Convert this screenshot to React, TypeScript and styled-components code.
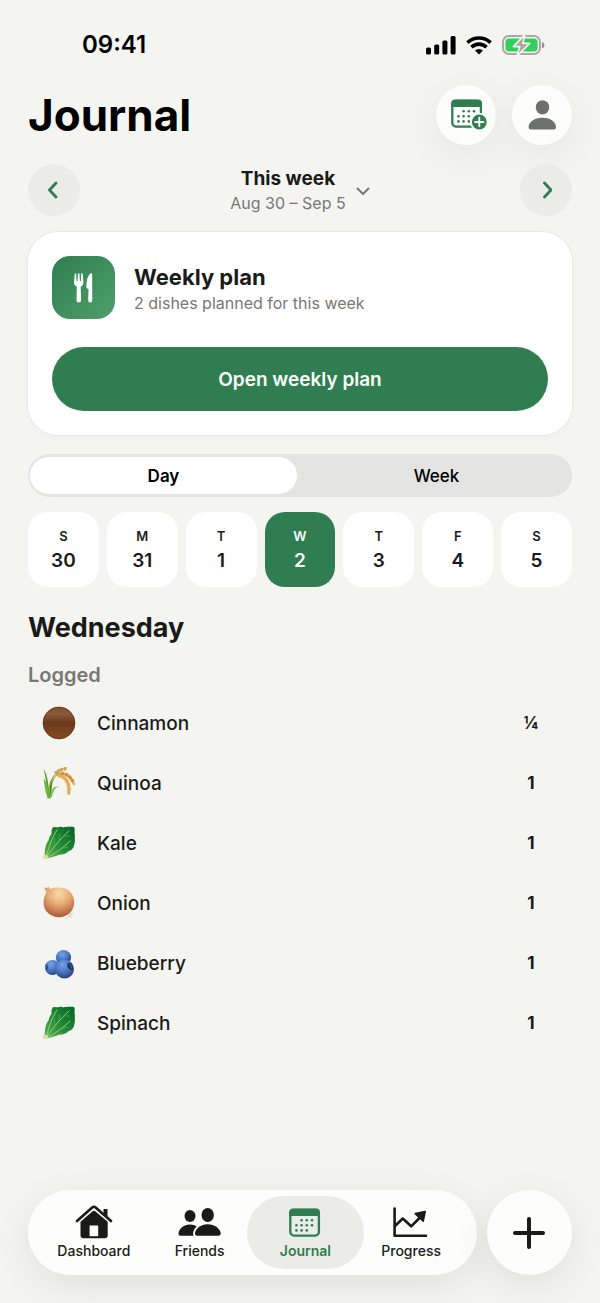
import { useState } from "react";
import styled, { createGlobalStyle } from "styled-components";

const GREEN = "#307d51";
const INK = "#1a1b19";

type DayT = { letter: string, date: number };
const days: DayT[] = [
  { letter: "S", date: 30 },
  { letter: "M", date: 31 },
  { letter: "T", date: 1 },
  { letter: "W", date: 2 },
  { letter: "T", date: 3 },
  { letter: "F", date: 4 },
  { letter: "S", date: 5 },
];

const logged = [
  { name: "Cinnamon", amount: "¼", Icon: CinnamonIcon },
  { name: "Quinoa", amount: "1", Icon: GrainIcon },
  { name: "Kale", amount: "1", Icon: LeafIcon },
  { name: "Onion", amount: "1", Icon: OnionIcon },
  { name: "Blueberry", amount: "1", Icon: BlueberryIcon },
  { name: "Spinach", amount: "1", Icon: LeafIcon },
];

const tabs = [
  { label: "Dashboard", Icon: HouseIcon },
  { label: "Friends", Icon: FriendsIcon },
  { label: "Journal", Icon: CalendarIcon },
  { label: "Progress", Icon: ProgressIcon },
];

export default function App() {
  const [mode, setMode] = useState("Day");
  const [selected, setSelected] = useState(2);

  return (
    <>
      <GlobalStyle />
      <Page>
        <StatusBar>
          <Time>09:41</Time>
          <StatusIcons>
            <SignalIcon />
            <WifiIcon />
            <BatteryIcon />
          </StatusIcons>
        </StatusBar>

        <Header>
          <PageTitle>Journal</PageTitle>
          <HeaderActions>
            <RoundButton aria-label="Add to calendar"><CalendarAddIcon /></RoundButton>
            <RoundButton aria-label="Profile"><PersonIcon /></RoundButton>
          </HeaderActions>
        </Header>

        <WeekNav>
          <ArrowButton aria-label="Previous week">
            <Chevron d="M8 2 1.500 9 8 16" />
          </ArrowButton>
          <WeekPicker>
            <span>
              <WeekName>This week</WeekName>
              <WeekRange>Aug 30 – Sep 5</WeekRange>
            </span>
            <svg width="14" height="9" viewBox="0 0 14 9" fill="none" stroke="#777876" strokeWidth="2" strokeLinecap="round" strokeLinejoin="round">
              <path d="m1.500 1.500 5.500 5.500 5.500-5.500" />
            </svg>
          </WeekPicker>
          <ArrowButton aria-label="Next week">
            <Chevron d="m4.500 2 6.500 7-6.500 7" />
          </ArrowButton>
        </WeekNav>

        <Card>
          <CardTop>
            <CardIcon><CutleryIcon /></CardIcon>
            <CardBody>
              <CardTitle>Weekly plan</CardTitle>
              <CardText>2 dishes planned for this week</CardText>
            </CardBody>
          </CardTop>
          <PrimaryButton>Open weekly plan</PrimaryButton>
        </Card>

        <Segmented>
          {["Day", "Week"].map((name) => (
            <Segment key={name} $active={mode === name} aria-pressed={mode === name} onClick={() => setMode(name)}>
              {name}
            </Segment>
          ))}
        </Segmented>

        <Days>
          {days.map(({ letter, date }) => (
            <DayButton key={date} $active={selected === date} onClick={() => setSelected(date)}>
              <DayLetter>{letter}</DayLetter>
              <DayDate>{date}</DayDate>
            </DayButton>
          ))}
        </Days>

        <DayTitle>Wednesday</DayTitle>
        <SectionTitle>Logged</SectionTitle>
        <List>
          {logged.map(({ name, amount, Icon }) => (
            <Row key={name}>
              <Icon />
              <RowName>{name}</RowName>
              <Amount>{amount}</Amount>
            </Row>
          ))}
        </List>

        <BottomBar>
          <TabBar>
            {tabs.map(({ label, Icon }) => (
              <Tab key={label} href="#" $active={label === "Journal"}>
                <Icon />
                {label}
              </Tab>
            ))}
          </TabBar>
          <AddButton aria-label="Add">
            <svg width="34" height="32" viewBox="0 0 34 32" stroke={INK} strokeWidth="4" strokeLinecap="round">
              <path d="M16 2v28M2 16h28" />
            </svg>
          </AddButton>
        </BottomBar>
      </Page>
    </>
  );
}

function Chevron({ d }: { d: string }) {
  return (
    <svg width="12" height="18" viewBox="0 0 12 18" fill="none" stroke={GREEN} strokeWidth="2.800" strokeLinecap="round" strokeLinejoin="round">
      <path d={d} />
    </svg>
  );
}

function SignalIcon() {
  return (
    <svg width="30" height="20" viewBox="0 0 30 20">
      <rect x="0" y="12.5" width="5" height="7" rx="1.6" />
      <rect x="8.2" y="9.4" width="5" height="10.1" rx="1.6" />
      <rect x="16.4" y="5.4" width="5" height="14.1" rx="1.6" />
      <rect x="24.6" y="1" width="5" height="18.5" rx="1.6" />
    </svg>
  );
}

function WifiIcon() {
  return (
    <svg width="26" height="20" viewBox="0 0 26 20" fill="none" stroke="#000" strokeWidth="3.6">
      <path d="M1.4 7.600a16.800 16.800 0 0 1 23.200 0" />
      <path d="M5.500 12.200a10.800 10.800 0 0 1 15 0" />
      <path d="M13 19.6 9 15.600a5.800 5.800 0 0 1 8 0z" fill="#000" stroke="none" />
    </svg>
  );
}

function BatteryIcon() {
  return (
    <svg width="43" height="22" viewBox="0 0 43 22">
      <rect x="1" y="2" width="37" height="18" rx="6" fill="none" stroke="#aaa9a8" strokeWidth="2" />
      <rect x="3.4" y="4.4" width="32.2" height="13.2" rx="3.8" fill="#34cf5b" />
      <path d="M40 8v6.4c1.5-.5 2.4-1.7 2.4-3.2S41.500 8.500 40 8z" fill="#8f8f8e" />
      <path d="M23 .4 11.400 12.600h6.400l-2.800 9.200L27.800 9.400h-7z" fill="#aaa5a5" stroke="#f4f5f1" strokeWidth="1.600" strokeLinejoin="round" />
    </svg>
  );
}

function CalendarShape() {
  return (
    <>
      <rect x="1.300" y="1.800" width="28.600" height="25.800" rx="3.600" fill="none" stroke="currentColor" strokeWidth="2.300" />
      <path d="M.2 8V4.600Q.2.600 4.200.6H27Q31 .6 31 4.600V8z" fill="currentColor" />
      <g fill="currentColor">
        {[12.600, 17.800, 23].map((x) => <circle key={x} cx={x} cy="12.200" r="1.300" />)}
        {[7.400, 12.600, 17.800, 23].map((x) => <circle key={x} cx={x} cy="17.300" r="1.300" />)}
        {[7.400, 12.600, 17.800].map((x) => <circle key={x} cx={x} cy="22.400" r="1.300" />)}
      </g>
    </>
  );
}

function CalendarIcon() {
  return (
    <svg width="32" height="34" viewBox="0 -3 32 34">
      <CalendarShape />
    </svg>
  );
}

function CalendarAddIcon() {
  return (
    <svg width="42" height="32" viewBox="-6 0 42 32" color={GREEN}>
      <CalendarShape />
      <circle cx="28.300" cy="23" r="9.200" fill="#fdfefb" />
      <circle cx="28.300" cy="23" r="7.400" fill={GREEN} />
      <path d="M28.300 18.800v8.400M24.100 23h8.400" stroke="#fdfefb" strokeWidth="1.900" strokeLinecap="round" />
    </svg>
  );
}

function PersonIcon() {
  return (
    <svg width="28" height="30" viewBox="0 0 28 30" fill="#6e706c">
      <ellipse cx="14.500" cy="7.400" rx="6.700" ry="7.200" />
      <path d="M2.800 29.400Q.6 29.400.6 27.200C.6 22.600 5.500 17.700 14.400 17.700S28 22.600 28 27.200q0 2.200-2.200 2.200z" />
    </svg>
  );
}

function CutleryIcon() {
  return (
    <svg width="20" height="30" viewBox="0 0 20 30" fill="#fff">
      <path d="M.8.600Q1.600-.1 2.200.700L2.500 8h1L3.900.700Q4.700-.2 5.500.700L5.900 8h1L7.200.700Q7.900-.1 8.700.600L9.400 9.500c0 2-1 3.200-2.700 4.200l.4 13.800q0 2-2.300 2t-2.300-2l.3-13.800C1 12.700 0 11.500 0 9.500z" />
      <path d="M18.200 1.200v26.300q0 2-2 2t-2-2l.3-11.300-1.300-.800q-.9-.6-.8-1.700c.1-6.700 1.400-11.500 4.100-13.300q1.700-.8 1.700.8z" />
    </svg>
  );
}

function HouseIcon() {
  return (
    <svg width="38" height="34" viewBox="0 0 38 34">
      <path d="M28.500 4h4v9l-4-4z" fill={INK} />
      <path d="M2 16 17.200 2.500q1.700-1.500 3.400 0L36 16" fill="none" stroke={INK} strokeWidth="2.600" strokeLinecap="round" />
      <path d="M5.500 16.800 17.300 6.500q1.600-1.300 3.200 0l12.200 10.300v13.400q0 3-3 3H8.500q-3 0-3-3z" fill={INK} />
      <rect x="14.600" y="20.500" width="8.600" height="10.700" fill="#fdfefb" />
    </svg>
  );
}

function FriendsIcon() {
  return (
    <svg width="43" height="34" viewBox="0 0 43 34" fill={INK}>
      <ellipse cx="12" cy="11" rx="5.500" ry="6" />
      <path d="M2.300 30.700Q.5 30.700.5 29c0-4 4-9.500 11.500-9.500 3 0 5 .8 6.800 2-2.200 2-3.700 4.500-3.700 7 0 .8.100 1.600.6 2.200z" />
      <ellipse cx="29.700" cy="10" rx="6.200" ry="6.900" />
      <path d="M19.300 30.700q-2.300 0-2.300-2c0-4 4.600-9.400 12.700-9.400s13 5.400 13 9.400q0 2-2.300 2z" />
    </svg>
  );
}

function ProgressIcon() {
  return (
    <svg width="38" height="34" viewBox="0 0 38 34" fill="none" stroke={INK} strokeWidth="2.600" strokeLinecap="round" strokeLinejoin="round">
      <path d="M2.600 3.500v27.300H34" />
      <path d="m3.500 20.500 7.300-7 8.400 7.800L29 11.500" />
      <path d="m23.200 8.600 10-2-2 9.600z" fill={INK} strokeWidth="1.600" />
    </svg>
  );
}

function CinnamonIcon() {
  return (
    <svg width="34" height="34" viewBox="0 0 34 34">
      <defs>
        <linearGradient id="cinnamon" x1="0" y1="0" x2="0" y2="1">
          <stop offset="0" stopColor="#7d4c30" />
          <stop offset=".2" stopColor="#8b5a3d" />
          <stop offset=".5" stopColor="#6c3a1b" />
          <stop offset="1" stopColor="#854b23" />
        </linearGradient>
      </defs>
      <circle cx="17" cy="17" r="15.900" fill="url(#cinnamon)" stroke="#673a20" strokeWidth="1" />
    </svg>
  );
}

function GrainIcon() {
  return (
    <svg width="34" height="34" viewBox="0 0 34 34" fill="none" strokeLinecap="round">
      <path d="M7 32C6 21 8 10 19 4" stroke="#9fb04e" strokeWidth="1.200" />
      <path d="M8 31C9 15 12 8.500 19 7.500" stroke="#a9b556" strokeWidth="1.200" />
      <path d="M5.500 32.500C4.500 22 4.200 11 1.300 2.500 6.500 10 6.600 22 7.700 31z" fill="#52a02e" />
      <path d="M6.500 32.500C2.500 27 3 18 1.300 12.500 6 17 6 25 8.500 31z" fill="#6fb43f" />
      <path d="M7.500 32.500C7.500 25 7 19 10.800 12 9 20 10 27 8.500 32z" fill="#3e8d28" />
      <path d="M8 31c1-7 3.500-12 9.500-10-4.500-.5-6 4-7.500 10z" fill="#8dbf50" />
      <path d="M13 6.500 18 3.300 24 1.800M19 4.800l5-1.500" stroke="#cda452" strokeWidth="1.900" strokeDasharray="1.500 2" />
      <path d="M16 8.200c7-2 13 1.500 16 10" stroke="#e4b366" strokeWidth="2.600" />
      <path d="M17 9.500c7 1.500 11 8 9.800 17.800" stroke="#dca050" strokeWidth="2.800" />
      <path d="M16 8.200c7-2 13 1.500 16 10" stroke="#d18d38" strokeWidth="3.400" strokeDasharray=".6 3.600" />
      <path d="M17 9.500c7 1.500 11 8 9.800 17.800" stroke="#e9ae58" strokeWidth="3.800" strokeDasharray=".8 3.700" />
    </svg>
  );
}

function LeafIcon() {
  return (
    <svg width="34" height="34" viewBox="0 0 34 34">
      <defs>
        <linearGradient id="leaf" x1="0" y1="1" x2="1" y2="0">
          <stop offset="0" stopColor="#63b348" />
          <stop offset=".45" stopColor="#248c39" />
          <stop offset="1" stopColor="#056324" />
        </linearGradient>
      </defs>
      <path d="M2.500 29.500C3 23 3.500 18 6.500 14.500c.5-3 1.700-5 3-6.500-.2-3 0-5.800 1.700-6.800 2-.5 3.800.4 5.300 0 2.200-.8 3.500-.6 5 .2 2.500-.8 7-.8 10.500-.4 1 1.600.8 3.600.4 5.400.8 2 .4 4 .4 6 .4 2.400 0 4.600-.6 6.400-.4 3.200-2.400 5.400-5.500 6.300-2.600 2.800-6 3.800-9.500 3.600C12 31 8 31 4.500 32.500z" fill="url(#leaf)" />
      <path d="M4.500 30C7 21 9.500 12 15 4M5 30.500C11 22 17 14 27 5M6 31c6-3 14-8 22-16" fill="none" stroke="#9ed67c" strokeWidth=".9" strokeLinecap="round" />
      <path d="m12 19 .5-7M17 16l.5-8M18 23l8-2M22 10l6 0M6 31c5-1 10-2 15-4" fill="none" stroke="#69b657" strokeWidth=".6" />
      <path d="M1 29.800q3-2.500 5.600 1.200c-1 2-3.500 2.700-5 1.800Q.3 31.500 1 29.800z" fill="#d9dfad" />
    </svg>
  );
}

function OnionIcon() {
  return (
    <svg width="34" height="34" viewBox="0 0 34 34">
      <defs>
        <radialGradient id="onion" cx=".5" cy=".22" r=".8">
          <stop offset="0" stopColor="#fbdfaa" />
          <stop offset=".45" stopColor="#e9ac77" />
          <stop offset="1" stopColor="#a9552f" />
        </radialGradient>
      </defs>
      <path d="m27 29 4-1.500M26 30l3.500 1M25 31l-1 1.500" stroke="#cfc3b4" strokeWidth="1" />
      <path d="M2 1.500 5 2l1.500-1.500L8 3c3-1.500 6-1.800 10-1.500C27 2 32.200 8.500 32.200 16 32.200 25 25.500 31.200 17 31.200S1.500 25 1.500 16.500C1.500 12 3 9 4.500 6.300z" fill="url(#onion)" />
      <path d="M6 5C12 6 12 20 11 30M7 5c9 1 15 13 12 26M6 6C3 12 4 22 8 28M9 4c10-1 18 9 17 23" fill="none" stroke="#c67d4c" strokeOpacity=".2" strokeWidth=".8" />
    </svg>
  );
}

function BlueberryIcon() {
  return (
    <svg width="34" height="34" viewBox="0 0 34 34">
      <defs>
        <radialGradient id="berry" cx=".4" cy=".28" r=".75">
          <stop offset="0" stopColor="#78a4e6" />
          <stop offset=".5" stopColor="#4d77c2" />
          <stop offset="1" stopColor="#263f7c" />
        </radialGradient>
      </defs>
      <circle cx="21.500" cy="11.500" r="7.600" fill="url(#berry)" />
      <circle cx="10.500" cy="21.500" r="7.600" fill="url(#berry)" />
      <path d="m3.800 18 1.700 2.500-1 3.500" fill="none" stroke="#2a4379" strokeWidth="1.200" />
      <circle cx="22.500" cy="23" r="9.500" fill="url(#berry)" />
      <path d="m25.500 17 3.500.5 2 3-.5 4-2.500-1-2.500-2.500z" fill="#1d2c55" />
      <path d="m27 18.500 2 1.500.5 2.500" fill="none" stroke="#5d7fc0" strokeWidth=".8" />
    </svg>
  );
}

const GlobalStyle = createGlobalStyle`
  * {
    box-sizing: border-box;
  }
  body {
    margin: 0;
    background: #f4f5f1;
    color: ${INK};
    font-family: Inter, "Liberation Sans", sans-serif;
  }
  button {
    border: 0;
    padding: 0;
    font-family: inherit;
    color: inherit;
    cursor: pointer;
  }
  svg {
    display: block;
    flex-shrink: 0;
  }
`;

const Page = styled.main`
  display: flex;
  flex-direction: column;
  min-height: 100vh;
  padding: 24px 28px 28px;
`;

const StatusBar = styled.div`
  display: flex;
  align-items: center;
  justify-content: space-between;
  height: 41px;
  padding: 0 27px 0 54px;
`;

const Time = styled.span`
  font-size: 24px;
  font-weight: 600;
  color: #000;
`;

const StatusIcons = styled.div`
  display: flex;
  align-items: center;
  gap: 10px;
`;

const Header = styled.header`
  display: flex;
  align-items: center;
  justify-content: space-between;
  margin-top: 20px;
`;

const PageTitle = styled.h1`
  margin: 0;
  font-size: 44px;
  line-height: 60px;
  font-weight: 700;
  color: #000;
`;

const HeaderActions = styled.div`
  display: flex;
  gap: 16px;
`;

const RoundButton = styled.button`
  display: flex;
  align-items: center;
  justify-content: center;
  width: 60px;
  height: 60px;
  border-radius: 50%;
  background: #fdfefb;
  box-shadow: 0 10px 40px rgba(0, 0, 0, 0.07);
`;

const WeekNav = styled.div`
  display: flex;
  align-items: center;
  justify-content: space-between;
  margin-top: 19px;
`;

const ArrowButton = styled.button`
  display: flex;
  align-items: center;
  justify-content: center;
  width: 52px;
  height: 52px;
  border-radius: 50%;
  background: #ebece8;
`;

const WeekPicker = styled.button`
  display: flex;
  align-items: center;
  gap: 10px;
  padding-top: 2px;
  background: none;
`;

const WeekName = styled.span`
  display: block;
  font-size: 19px;
  line-height: 24px;
  font-weight: 700;
`;

const WeekRange = styled.span`
  display: block;
  font-size: 16px;
  line-height: 24px;
  color: #777876;
`;

const Card = styled.section`
  margin-top: 16px;
  padding: 24px;
  border-radius: 30px;
  background: #fff;
  box-shadow: 0 0 0 1px #e9eae7, 0 2px 8px rgba(0, 0, 0, 0.03);
`;

const CardTop = styled.div`
  display: flex;
  align-items: center;
  gap: 19px;
`;

const CardIcon = styled.div`
  display: flex;
  align-items: center;
  justify-content: center;
  width: 63px;
  height: 63px;
  border-radius: 18px;
  background: linear-gradient(135deg, ${GREEN}, #4ea06a);
`;

const CardBody = styled.div`
  padding-top: 2px;
`;

const CardTitle = styled.h2`
  margin: 0;
  font-size: 22px;
  line-height: 28px;
  font-weight: 700;
`;

const CardText = styled.p`
  margin: 0;
  font-size: 16px;
  line-height: 24px;
  color: #777876;
`;

const PrimaryButton = styled.button`
  width: 100%;
  height: 64px;
  margin-top: 28px;
  border-radius: 32px;
  background: ${GREEN};
  color: #f8fff8;
  font-size: 19px;
  font-weight: 600;
`;

const Segmented = styled.div`
  display: flex;
  gap: 6px;
  height: 43px;
  margin-top: 19px;
  padding: 3px 2px;
  border-radius: 22px;
  background: #e4e4e3;
`;

const Segment = styled.button<{ $active: boolean }>`
  flex: 1;
  border-radius: 19px;
  background: ${(props) => props.$active ? "#fff" : "transparent"};
  color: #000;
  font-size: 17px;
  font-weight: ${(props) => props.$active ? 600 : 500};
`;

const Days = styled.div`
  display: grid;
  grid-template-columns: repeat(7, 1fr);
  gap: 8px;
  margin-top: 15px;
`;

const DayButton = styled.button<{ $active: boolean }>`
  display: flex;
  flex-direction: column;
  align-items: center;
  justify-content: center;
  gap: 1px;
  height: 75px;
  padding-bottom: 2px;
  border-radius: 20px;
  background: ${(props) => props.$active ? GREEN : "#fff"};
  color: ${(props) => props.$active ? "#f8fff8" : INK};
`;

const DayLetter = styled.span`
  font-size: 13px;
  line-height: 24px;
  font-weight: 600;
`;

const DayDate = styled.span`
  font-size: 19px;
  line-height: 24px;
  font-weight: 600;
`;

const DayTitle = styled.h2`
  margin: 23px 0 0;
  font-size: 27px;
  line-height: 36px;
  font-weight: 700;
`;

const SectionTitle = styled.h3`
  margin: 17px 0 0;
  font-size: 20px;
  line-height: 24px;
  font-weight: 600;
  color: #777876;
`;

const List = styled.ul`
  margin: 6px 0 28px;
  padding: 0;
  list-style: none;
`;

const Row = styled.li`
  display: flex;
  align-items: center;
  gap: 21px;
  height: 60px;
  padding: 0 33px 0 14px;
`;

const RowName = styled.span`
  flex: 1;
  font-size: 19px;
  font-weight: 500;
`;

const Amount = styled.span`
  display: flex;
  justify-content: center;
  width: 16px;
  font-size: 17px;
  font-weight: 700;
`;

const BottomBar = styled.div`
  display: flex;
  align-items: center;
  gap: 10px;
  margin-top: auto;
`;

const TabBar = styled.nav`
  display: flex;
  flex: 1;
  padding: 6px 13px;
  border-radius: 42px;
  background: #fdfefb;
  box-shadow: 0 10px 40px rgba(0, 0, 0, 0.09);
`;

const Tab = styled.a<{ $active: boolean }>`
  display: flex;
  flex: 1;
  flex-direction: column;
  align-items: center;
  height: 73px;
  margin: 0 -6px;
  padding-top: 9px;
  border-radius: 37px;
  background: ${(props) => props.$active ? "#ebece8" : "transparent"};
  color: ${(props) => props.$active ? GREEN : INK};
  font-size: 14px;
  line-height: 24px;
  font-weight: ${(props) => props.$active ? 600 : 500};
  text-decoration: none;
`;

const AddButton = styled.button`
  display: flex;
  align-items: center;
  justify-content: center;
  width: 85px;
  height: 85px;
  border-radius: 50%;
  background: #fdfefb;
  box-shadow: 0 10px 40px rgba(0, 0, 0, 0.09);
`;
